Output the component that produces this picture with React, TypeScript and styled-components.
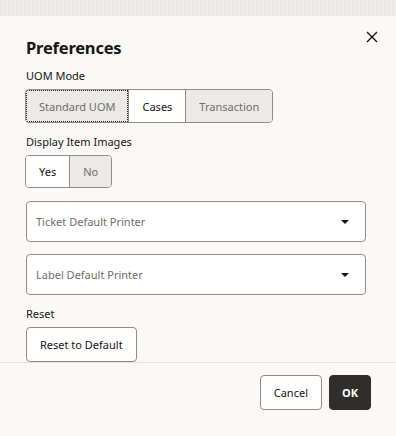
import styled, { createGlobalStyle } from "styled-components";

const Global = createGlobalStyle`
  html, body {
    margin: 0;
    padding: 0;
    background: #ecebe9;
  }
  body {
    font-family: "Noto Sans", "Open Sans", sans-serif;
    color: #161513;
  }
`;

const Page = styled.div`
  width: 396px;
  height: 436px;
  display: flex;
  flex-direction: column;
  overflow: hidden;
`;

const Backdrop = styled.div`
  height: 16px;
  flex: none;
  background: repeating-linear-gradient(
    90deg,
    #eeedeb 0px,
    #e6e5e3 1px,
    #f2f1ef 3px,
    #eae9e7 4px
  );
`;

const Dialog = styled.div`
  flex: 1;
  display: flex;
  flex-direction: column;
  background: #faf9f8;
  min-height: 0;
`;

const Header = styled.div`
  display: flex;
  align-items: flex-start;
  justify-content: space-between;
  padding: 20px 16px 0 26px;
  height: 24px;
`;

const Title = styled.h1`
  margin: 0;
  font-size: 16.5px;
  font-weight: 700;
  line-height: 24px;
  letter-spacing: -0.2px;
`;

const CloseButton = styled.button`
  border: none;
  background: transparent;
  padding: 0;
  width: 16px;
  height: 16px;
  margin-top: -7px;
  display: flex;
  align-items: center;
  justify-content: center;
  color: #161513;
  cursor: pointer;
`;

const Body = styled.div`
  height: 302px;
  flex: none;
  overflow: hidden;
  padding: 9px 30px 0 26px;
  box-sizing: border-box;
  display: flex;
  flex-direction: column;
`;

const Label = styled.div<{ $top?: number }>`
  font-size: 11px;
  line-height: 14px;
  margin-top: ${(p) => p.$top ?? 0}px;
  margin-bottom: 6px;
  color: #161513;
`;

const ButtonSet = styled.div`
  display: inline-flex;
  align-self: flex-start;
  border: 1px solid #8f8c88;
  border-radius: 4px;
  overflow: hidden;
  margin-left: -1px;
`;

const SetButton = styled.button<{ $on?: boolean; $focus?: boolean }>`
  height: 32px;
  border: none;
  border-left: 1px solid #8f8c88;
  &:first-child {
    border-left: none;
  }
  padding: 0 13px;
  font-family: inherit;
  font-size: 11px;
  background: ${(p) => (p.$on ? "#ffffff" : "#ebeae8")};
  color: ${(p) => (p.$on ? "#161513" : "#6f6c68")};
  outline: ${(p) => (p.$focus ? "1px dotted #222" : "none")};
  outline-offset: -1px;
`;

const Select = styled.div<{ $top: number }>`
  margin-top: ${(p) => p.$top}px;
  height: 39px;
  flex: none;
  border: 1px solid #8f8c88;
  border-radius: 4px;
  background: #ffffff;
  display: flex;
  align-items: center;
  justify-content: space-between;
  padding: 0 16px 0 9px;
  font-size: 11px;
  color: #6f6c68;
`;

const Caret = styled.span`
  width: 0;
  height: 0;
  border-left: 4.5px solid transparent;
  border-right: 4.5px solid transparent;
  border-top: 4.5px solid #161513;
`;

const PlainButton = styled.button<{ $dark?: boolean }>`
  height: 35px;
  flex: none;
  padding: 0 ${(p) => (p.$dark ? 12 : 13)}px;
  border-radius: 4px;
  border: 1px solid ${(p) => (p.$dark ? "#312d2a" : "#8f8c88")};
  background: ${(p) => (p.$dark ? "#312d2a" : "#ffffff")};
  color: ${(p) => (p.$dark ? "#ffffff" : "#161513")};
  font-family: inherit;
  font-size: 11px;
  font-weight: ${(p) => (p.$dark ? 700 : 400)};
  align-self: flex-start;
`;

const Footer = styled.div`
  border-top: 1px solid #e4e2df;
  display: flex;
  justify-content: flex-end;
  gap: 7px;
  padding: 12px 25px 0 0;
`;

function CloseIcon() {
  return (
    <svg width="12" height="12" viewBox="0 0 12 12">
      <path d="M1 1L11 11M11 1L1 11" stroke="currentColor" strokeWidth="1.4" />
    </svg>
  );
}

export default function App() {
  return (
    <Page>
      <Global />
      <Backdrop />
      <Dialog>
        <Header>
          <Title>Preferences</Title>
          <CloseButton aria-label="Close">
            <CloseIcon />
          </CloseButton>
        </Header>
        <Body>
          <Label>UOM Mode</Label>
          <ButtonSet>
            <SetButton $focus>Standard UOM</SetButton>
            <SetButton $on>Cases</SetButton>
            <SetButton>Transaction</SetButton>
          </ButtonSet>
          <Label $top={12}>Display Item Images</Label>
          <ButtonSet>
            <SetButton $on>Yes</SetButton>
            <SetButton>No</SetButton>
          </ButtonSet>
          <Select $top={13}>
            <span>Ticket Default Printer</span>
            <Caret />
          </Select>
          <Select $top={12}>
            <span>Label Default Printer</span>
            <Caret />
          </Select>
          <Label $top={12}>Reset</Label>
          <PlainButton>Reset to Default</PlainButton>
        </Body>
        <Footer>
          <PlainButton>Cancel</PlainButton>
          <PlainButton $dark>OK</PlainButton>
        </Footer>
      </Dialog>
    </Page>
  );
}
